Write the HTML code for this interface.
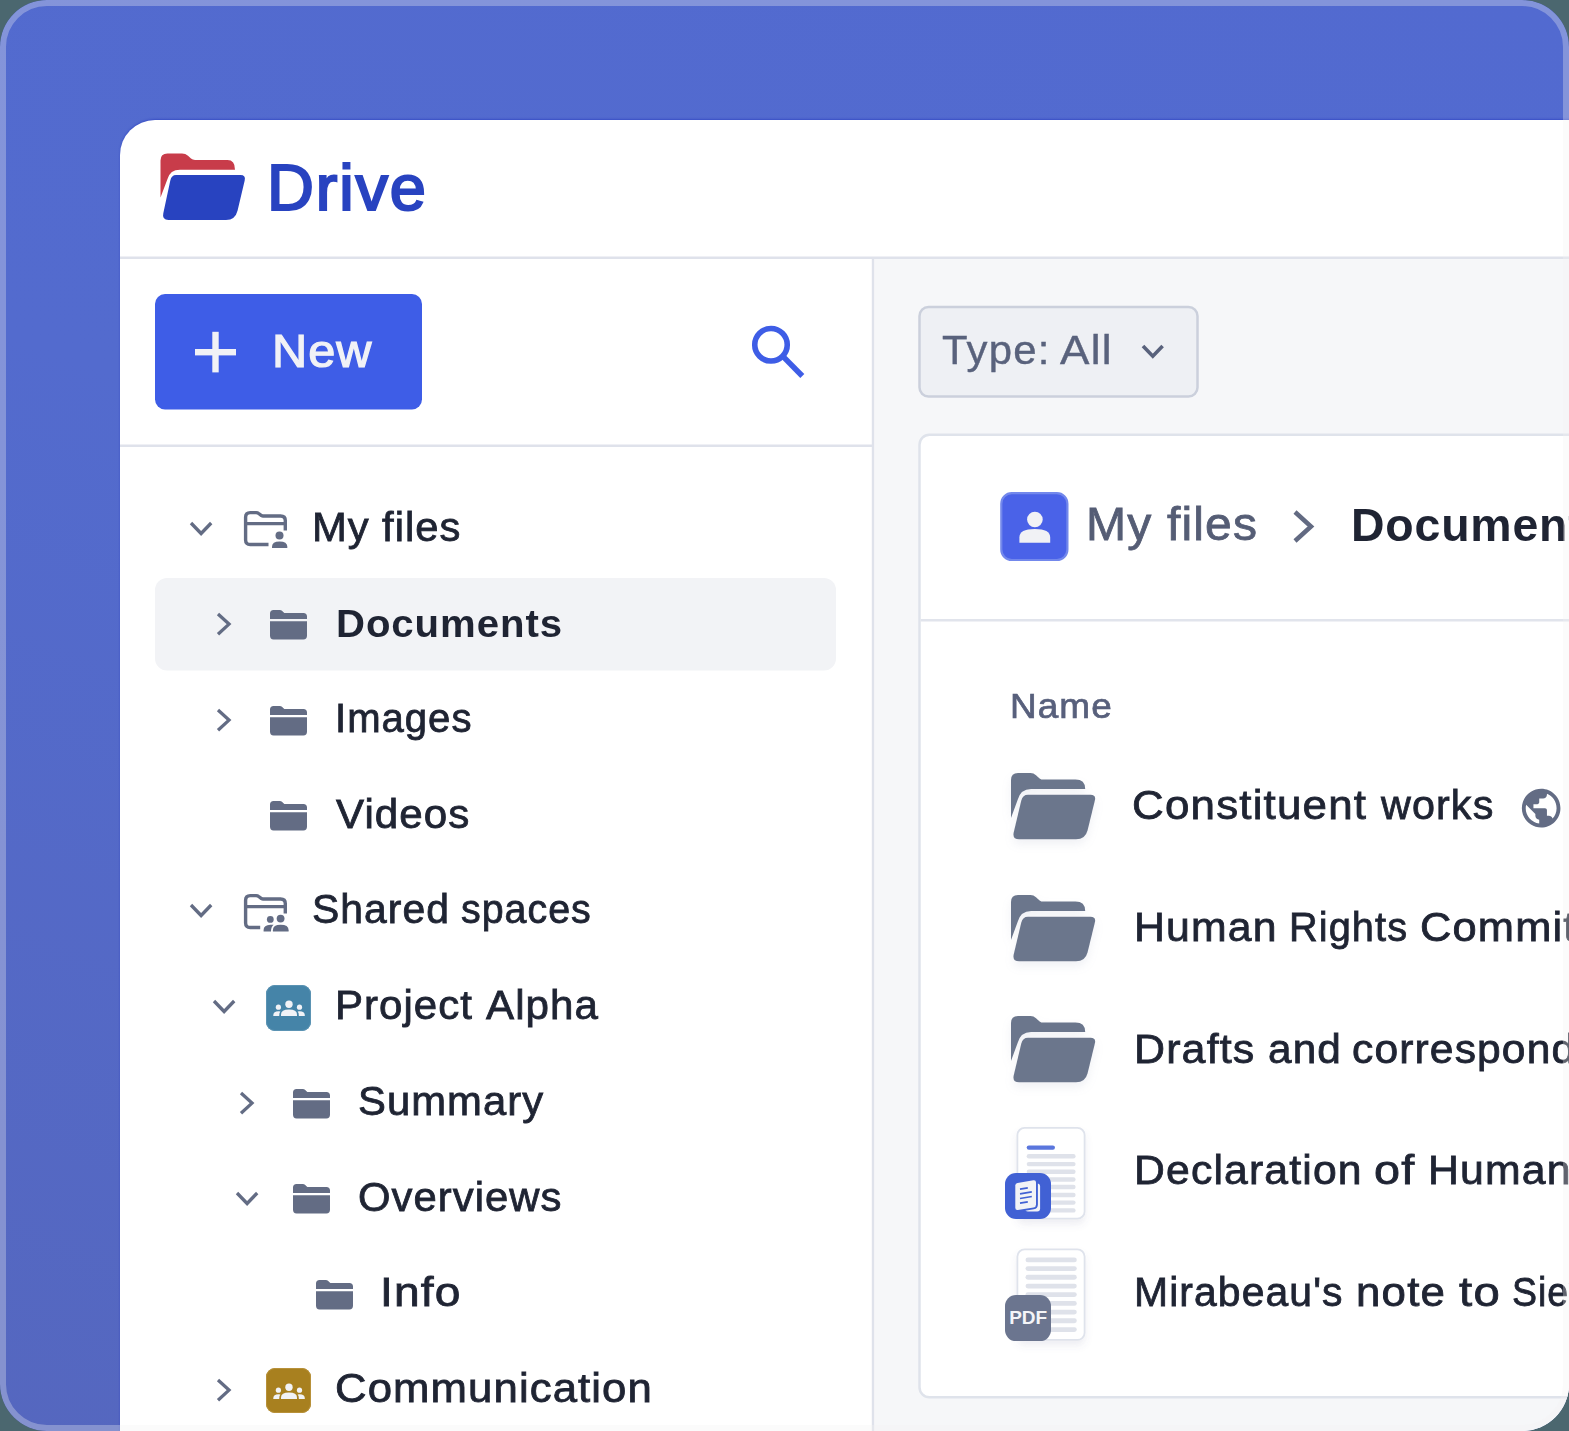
<!DOCTYPE html>
<html>
<head>
<meta charset="utf-8">
<title>Drive</title>
<style>
html,body{margin:0;padding:0;}
body{width:1569px;height:1431px;overflow:hidden;background:#4b676f;font-family:"Liberation Sans",sans-serif;position:relative;}
#frame{position:absolute;left:0;top:0;width:1569px;height:1431px;border-radius:47px;overflow:hidden;background:linear-gradient(200deg,#526ad0 0%,#536bce 45%,#5567bf 100%);}
#rim{position:absolute;left:0;top:0;width:1557px;height:1419px;border:6px solid rgba(243,243,243,0.31);border-radius:47px;z-index:50;pointer-events:none;}
#app{position:absolute;left:120px;top:120px;width:1460px;height:1320px;background:#fff;border-top-left-radius:35px;overflow:hidden;box-shadow:0 -1px 2px rgba(40,60,190,0.6);}
#c{position:absolute;left:-120px;top:-120px;width:1569px;height:1431px;}
.abs{position:absolute;}
.t{position:absolute;white-space:nowrap;line-height:1;color:#1f2433;}
svg{position:absolute;overflow:visible;}
.sh{filter:drop-shadow(0 5px 5px rgba(90,100,140,0.09));}
.sh2{box-shadow:0 5px 7px rgba(90,100,140,0.09);}
</style>
</head>
<body>
<div id="frame">
<div id="app">
<div id="c">
<svg style="left:0;top:0" width="1569" height="1431" viewBox="0 0 1569 1431"><rect x="874" y="259" width="700" height="1180" fill="#f6f7f9"/><rect x="120" y="256.5" width="1460" height="2.5" fill="#dfe2eb"/><rect x="871.8" y="258" width="2.3" height="1180" fill="#dfe2eb"/><rect x="120" y="444.5" width="752" height="2.5" fill="#dfe2eb"/><rect x="155" y="294" width="267" height="115.5" rx="10" fill="#3e5de7"/><rect x="195" y="349" width="41" height="6.4" fill="#f1f2f6"/><rect x="212.3" y="331.8" width="6.4" height="40.6" fill="#f1f2f6"/><rect x="155" y="578" width="681" height="92.6" rx="12" fill="#f2f3f6"/><rect x="919.5" y="307" width="278" height="89.5" rx="9" fill="#eef0f4" stroke="#cbd0dc" stroke-width="2.5"/><rect x="919.5" y="434.7" width="700" height="962.5" rx="10" fill="#fff" stroke="#dfe3eb" stroke-width="2.5"/><rect x="920.7" y="619.0" width="700" height="2.5" fill="#e1e4ec"/><rect x="1001.3" y="493.2" width="66.1" height="66.8" rx="10.5" fill="#4a62e8" stroke="#7388ec" stroke-width="2.2"/></svg>
<svg style="left:150px;top:140px;" width="110" height="100" viewBox="150 140 110 100">
  <path d="M160.5 197.5 V160.4 Q160.5 153.4 167.5 153.4 H182 Q185.5 153.4 188 155.8 L191 158.6 Q192.6 160 195 160 H227.5 Q235 160 235 169.7 H180 Q170 169.7 167.5 179 Z" fill="#c83c4a"/>
  <path d="M176 175 H240.5 Q246 175 244.7 180.5 L237.6 210.5 Q235.3 220 226 220 H168.5 Q161.8 220 163.3 213.3 L170.3 180.5 Q171.5 175 176 175 Z" fill="#2843c0"/>
</svg>
<div class="t" id="tDrive" style="left:266.6px;top:156px;font-size:64px;color:#2843c0;transform:scaleX(1.0151);transform-origin:0 0;letter-spacing:1.8px;-webkit-text-stroke:2.2px #2843c0;">Drive</div>
<div class="t" id="tNew" style="left:272.06px;top:328px;font-size:46px;color:#f1f2f6;transform:scaleX(1.0582);transform-origin:0 0;letter-spacing:1px;-webkit-text-stroke:1.2px #f1f2f6;">New</div>
<svg style="left:740px;top:315px;" width="80" height="75" viewBox="740 315 80 75">
  <circle cx="771" cy="344.8" r="16.25" fill="none" stroke="#3e5de6" stroke-width="5.6"/>
  <path d="M783.2 356.6 L802.3 376" stroke="#3e5de6" stroke-width="5.6" fill="none"/>
</svg>
<svg style="left:191px;top:522.5px" width="20.2" height="10.5"><path d="M0 0 L10.1 10.5 L20.2 0" fill="none" stroke="#636c84" stroke-width="3.3"/></svg>
<svg style="left:243.8px;top:510.5px" width="48" height="40" viewBox="0 0 48 40"><path d="M24.5 33.5 H6.2 Q1.6 33.5 1.6 28.9 V6.2 Q1.6 1.6 6.2 1.6 H12.2 Q13.6 1.6 14.7 2.5 L17.5 4.6 Q18.2 5.0 19 5.0 H36.6 Q41.3 5.0 41.3 9.6 V19.5" fill="none" stroke="#636c84" stroke-width="3.4" stroke-linejoin="round"/><path d="M1.6 12.7 H41.3" stroke="#636c84" stroke-width="3.3"/><circle cx="35.5" cy="24.4" r="4" fill="#636c84"/><path d="M28 37.1 V35.6 Q28 30.4 35.6 30.4 Q43.3 30.4 43.3 35.6 V37.1 Z" fill="#636c84"/></svg>
<div class="t" id="r0a" style="left:311.92px;top:507.0px;font-size:40px;color:#1f2433;transform:scaleX(1.0441);transform-origin:0 0;letter-spacing:1.0px;-webkit-text-stroke:0.8px #1f2433;">My</div><div class="t" id="r0b" style="left:382.01px;top:507.0px;font-size:40px;color:#1f2433;transform:scaleX(1.0429);transform-origin:0 0;letter-spacing:1.0px;-webkit-text-stroke:0.8px #1f2433;">files</div>
<svg style="left:218.0px;top:614.4px" width="11" height="20.2"><path d="M0 0 L11 10.1 L0 20.2" fill="none" stroke="#636c84" stroke-width="3.3"/></svg>
<svg style="left:269.9px;top:609.9px" width="37" height="29.4" viewBox="0 0 37 29.4"><path d="M0 8.9 V3.6 Q0 0 3.6 0 H9.6 Q11.3 0 12.5 1.2 L14.3 2.9 H33.4 Q37 2.9 37 6.5 V8.9 Z" fill="#636c84"/><path d="M0 11.2 H37 V25.8 Q37 29.4 33.4 29.4 H3.6 Q0 29.4 0 25.8 Z" fill="#636c84"/></svg>
<div class="t" id="r1a" style="left:335.58px;top:604.0px;font-size:39px;color:#1f2433;transform:scaleX(1.0294);transform-origin:0 0;letter-spacing:0.9px;font-weight:bold;">Documents</div>
<svg style="left:218.0px;top:710.1px" width="11" height="20.2"><path d="M0 0 L11 10.1 L0 20.2" fill="none" stroke="#636c84" stroke-width="3.3"/></svg>
<svg style="left:269.9px;top:705.6px" width="37" height="29.4" viewBox="0 0 37 29.4"><path d="M0 8.9 V3.6 Q0 0 3.6 0 H9.6 Q11.3 0 12.5 1.2 L14.3 2.9 H33.4 Q37 2.9 37 6.5 V8.9 Z" fill="#636c84"/><path d="M0 11.2 H37 V25.8 Q37 29.4 33.4 29.4 H3.6 Q0 29.4 0 25.8 Z" fill="#636c84"/></svg>
<div class="t" id="r2a" style="left:334.93px;top:698.0px;font-size:40px;color:#1f2433;transform:scaleX(1.0020);transform-origin:0 0;letter-spacing:1.0px;-webkit-text-stroke:0.8px #1f2433;">Images</div>
<svg style="left:269.9px;top:801.3px" width="37" height="29.4" viewBox="0 0 37 29.4"><path d="M0 8.9 V3.6 Q0 0 3.6 0 H9.6 Q11.3 0 12.5 1.2 L14.3 2.9 H33.4 Q37 2.9 37 6.5 V8.9 Z" fill="#636c84"/><path d="M0 11.2 H37 V25.8 Q37 29.4 33.4 29.4 H3.6 Q0 29.4 0 25.8 Z" fill="#636c84"/></svg>
<div class="t" id="r3a" style="left:336.18px;top:794.0px;font-size:40px;color:#1f2433;transform:scaleX(1.0528);transform-origin:0 0;letter-spacing:1.0px;-webkit-text-stroke:0.8px #1f2433;">Videos</div>
<svg style="left:191px;top:905.3px" width="20.2" height="10.5"><path d="M0 0 L10.1 10.5 L20.2 0" fill="none" stroke="#636c84" stroke-width="3.3"/></svg>
<svg style="left:243.8px;top:893.5px" width="48" height="40" viewBox="0 0 48 40"><path d="M16.2 33.5 H6.2 Q1.6 33.5 1.6 28.9 V6.2 Q1.6 1.6 6.2 1.6 H12.2 Q13.6 1.6 14.7 2.5 L17.5 4.6 Q18.2 5.0 19 5.0 H36.6 Q41.3 5.0 41.3 9.6 V19.5" fill="none" stroke="#636c84" stroke-width="3.4" stroke-linejoin="round"/><path d="M1.6 12.7 H41.3" stroke="#636c84" stroke-width="3.3"/><circle cx="26.3" cy="25.4" r="3.4" fill="#636c84"/><circle cx="36.6" cy="24.6" r="3.9" fill="#636c84"/><path d="M19.6 37.5 V36 Q19.6 31 26.5 30.8 L29.6 30.8 Q27 33 27 37.5 Z" fill="#636c84"/><path d="M28.9 37.5 V36.2 Q28.9 30.8 36.7 30.8 Q44.6 30.8 44.6 36.2 V37.5 Z" fill="#636c84"/></svg>
<div class="t" id="r4a" style="left:311.82px;top:889.0px;font-size:40px;color:#1f2433;transform:scaleX(1.0218);transform-origin:0 0;letter-spacing:1.0px;-webkit-text-stroke:0.8px #1f2433;">Shared</div><div class="t" id="r4b" style="left:460.5px;top:889.0px;font-size:40px;color:#1f2433;transform:scaleX(0.9847);transform-origin:0 0;letter-spacing:1.0px;-webkit-text-stroke:0.8px #1f2433;">spaces</div>
<svg style="left:214.0px;top:1001.0px" width="20.2" height="10.5"><path d="M0 0 L10.1 10.5 L20.2 0" fill="none" stroke="#636c84" stroke-width="3.3"/></svg>
<div class="abs" style="left:266px;top:985.1px;width:45.4px;height:45.6px;border-radius:9px;background:#4584a8;box-shadow:inset 0 0 0 1px #5b93b3;"></div><svg style="left:266px;top:985.1px" width="45.4" height="45.6" viewBox="0 0 45.4 45.6"><circle cx="23" cy="19.3" r="3.7" fill="#f1f2f6"/><circle cx="12.4" cy="22.2" r="2.6" fill="#f1f2f6"/><circle cx="33.5" cy="22.2" r="2.6" fill="#f1f2f6"/><path d="M15 31.1 V29.6 Q15 24.6 23 24.6 Q31 24.6 31 29.6 V31.1 Z" fill="#f1f2f6"/><path d="M7.3 31.1 V30 Q7.3 26.3 12.6 26.2 L14.4 26.4 Q13.2 27.8 13.2 31.1 Z" fill="#f1f2f6"/><path d="M38.8 31.1 V30 Q38.8 26.3 33.5 26.2 L31.7 26.4 Q32.9 27.8 32.9 31.1 Z" fill="#f1f2f6"/></svg>
<div class="t" id="r5a" style="left:335.09px;top:985.0px;font-size:40px;color:#1f2433;transform:scaleX(1.0495);transform-origin:0 0;letter-spacing:1.0px;-webkit-text-stroke:0.8px #1f2433;">Project</div><div class="t" id="r5b" style="left:486.48px;top:985.0px;font-size:40px;color:#1f2433;transform:scaleX(1.0523);transform-origin:0 0;letter-spacing:1.0px;-webkit-text-stroke:0.8px #1f2433;">Alpha</div>
<svg style="left:241.2px;top:1093.0px" width="11" height="20.2"><path d="M0 0 L11 10.1 L0 20.2" fill="none" stroke="#636c84" stroke-width="3.3"/></svg>
<svg style="left:293.09999999999997px;top:1088.5px" width="37" height="29.4" viewBox="0 0 37 29.4"><path d="M0 8.9 V3.6 Q0 0 3.6 0 H9.6 Q11.3 0 12.5 1.2 L14.3 2.9 H33.4 Q37 2.9 37 6.5 V8.9 Z" fill="#636c84"/><path d="M0 11.2 H37 V25.8 Q37 29.4 33.4 29.4 H3.6 Q0 29.4 0 25.8 Z" fill="#636c84"/></svg>
<div class="t" id="r6a" style="left:358.23px;top:1081.0px;font-size:40px;color:#1f2433;transform:scaleX(1.0445);transform-origin:0 0;letter-spacing:1.0px;-webkit-text-stroke:0.8px #1f2433;">Summary</div>
<svg style="left:237.2px;top:1192.5px" width="20.2" height="10.5"><path d="M0 0 L10.1 10.5 L20.2 0" fill="none" stroke="#636c84" stroke-width="3.3"/></svg>
<svg style="left:293.09999999999997px;top:1184.2px" width="37" height="29.4" viewBox="0 0 37 29.4"><path d="M0 8.9 V3.6 Q0 0 3.6 0 H9.6 Q11.3 0 12.5 1.2 L14.3 2.9 H33.4 Q37 2.9 37 6.5 V8.9 Z" fill="#636c84"/><path d="M0 11.2 H37 V25.8 Q37 29.4 33.4 29.4 H3.6 Q0 29.4 0 25.8 Z" fill="#636c84"/></svg>
<div class="t" id="r7a" style="left:357.91px;top:1177.0px;font-size:40px;color:#1f2433;transform:scaleX(1.0447);transform-origin:0 0;letter-spacing:1.0px;-webkit-text-stroke:0.8px #1f2433;">Overviews</div>
<svg style="left:316.29999999999995px;top:1279.9px" width="37" height="29.4" viewBox="0 0 37 29.4"><path d="M0 8.9 V3.6 Q0 0 3.6 0 H9.6 Q11.3 0 12.5 1.2 L14.3 2.9 H33.4 Q37 2.9 37 6.5 V8.9 Z" fill="#636c84"/><path d="M0 11.2 H37 V25.8 Q37 29.4 33.4 29.4 H3.6 Q0 29.4 0 25.8 Z" fill="#636c84"/></svg>
<div class="t" id="r8a" style="left:380.43px;top:1272.0px;font-size:40px;color:#1f2433;transform:scaleX(1.1528);transform-origin:0 0;letter-spacing:1.0px;-webkit-text-stroke:0.8px #1f2433;">Info</div>
<svg style="left:218.0px;top:1380.1px" width="11" height="20.2"><path d="M0 0 L11 10.1 L0 20.2" fill="none" stroke="#636c84" stroke-width="3.3"/></svg>
<div class="abs" style="left:266px;top:1367.9px;width:45.4px;height:45.6px;border-radius:9px;background:#a8801f;box-shadow:inset 0 0 0 1px #b8913a;"></div><svg style="left:266px;top:1367.9px" width="45.4" height="45.6" viewBox="0 0 45.4 45.6"><circle cx="23" cy="19.3" r="3.7" fill="#f1f2f6"/><circle cx="12.4" cy="22.2" r="2.6" fill="#f1f2f6"/><circle cx="33.5" cy="22.2" r="2.6" fill="#f1f2f6"/><path d="M15 31.1 V29.6 Q15 24.6 23 24.6 Q31 24.6 31 29.6 V31.1 Z" fill="#f1f2f6"/><path d="M7.3 31.1 V30 Q7.3 26.3 12.6 26.2 L14.4 26.4 Q13.2 27.8 13.2 31.1 Z" fill="#f1f2f6"/><path d="M38.8 31.1 V30 Q38.8 26.3 33.5 26.2 L31.7 26.4 Q32.9 27.8 32.9 31.1 Z" fill="#f1f2f6"/></svg>
<div class="t" id="r9a" style="left:334.63px;top:1368.0px;font-size:40px;color:#1f2433;transform:scaleX(1.0929);transform-origin:0 0;letter-spacing:1.0px;-webkit-text-stroke:0.8px #1f2433;">Communication</div>
<div class="t" id="tTypea" style="left:941.58px;top:330px;font-size:40px;color:#59627c;transform:scaleX(1.0462);transform-origin:0 0;letter-spacing:1.2px;-webkit-text-stroke:0.4px #59627c;">Type:</div><div class="t" id="tTypeb" style="left:1060.09px;top:330px;font-size:40px;color:#59627c;transform:scaleX(1.1029);transform-origin:0 0;letter-spacing:1.2px;-webkit-text-stroke:0.4px #59627c;">All</div>
<svg style="left:1143px;top:346px" width="19.6" height="10.2"><path d="M0 0 L9.8 10.2 L19.6 0" fill="none" stroke="#59627c" stroke-width="3.6"/></svg>
<svg style="left:1000px;top:492px" width="70" height="70" viewBox="1000 492 70 70"><circle cx="1034.9" cy="519.5" r="7.8" fill="#f1f2f5"/><path d="M1019.4 542.8 V537.5 Q1019.4 529.1 1034.8 529.1 Q1050.2 529.1 1050.2 537.5 V542.8 Z" fill="#f1f2f5"/></svg>
<div class="t" id="bc1a" style="left:1086.31px;top:501px;font-size:46px;color:#555d75;transform:scaleX(1.0463);transform-origin:0 0;letter-spacing:1.1px;-webkit-text-stroke:0.8px #555d75;">My</div><div class="t" id="bc1b" style="left:1166.54px;top:501px;font-size:46px;color:#555d75;transform:scaleX(1.0437);transform-origin:0 0;letter-spacing:1.1px;-webkit-text-stroke:0.8px #555d75;">files</div>
<svg style="left:1294.5px;top:511.5px" width="16" height="29"><path d="M0 0 L16 14.5 L0 29" fill="none" stroke="#626a82" stroke-width="4.5"/></svg>
<div class="t" id="bc2" style="left:1351.11px;top:502px;font-size:46px;color:#1f2433;transform:scaleX(1.0097);transform-origin:0 0;letter-spacing:0.8px;font-weight:bold;">Documents</div>
<div class="t" id="tName" style="left:1010.31px;top:689px;font-size:34.5px;color:#58607c;transform:scaleX(1.0705);transform-origin:0 0;letter-spacing:1.0px;-webkit-text-stroke:0.7px #58607c;">Name</div>
<div class="t" id="f0a" style="left:1132.08px;top:785.0px;font-size:41px;color:#1f2433;transform:scaleX(1.0716);transform-origin:0 0;letter-spacing:1.1px;-webkit-text-stroke:0.8px #1f2433;">Constituent</div><div class="t" id="f0b" style="left:1381.23px;top:785.0px;font-size:41px;color:#1f2433;transform:scaleX(1.0073);transform-origin:0 0;letter-spacing:1.1px;-webkit-text-stroke:0.8px #1f2433;">works</div>
<svg class="sh" style="left:1010.7px;top:772.7px" width="90" height="72" viewBox="0 0 90 72"><path d="M0 45 V7 Q0 0 7 0 H19.5 Q22.6 0 25 2.2 L28.6 5.4 Q30.2 6.6 32.2 6.6 H64.5 Q74.2 6.6 74.2 16 H20 Q9.5 16 6.6 27 Z" fill="#6b768c"/><path d="M20.5 21.7 H79.5 Q85.2 21.7 83.9 27.3 L76.6 57.2 Q74.3 66.3 65 66.3 H8.2 Q1.3 66.3 2.7 59.6 L10.3 27.5 Q11.7 21.7 17 21.7 Z" fill="#6b768c"/></svg>
<div class="t" id="f1a" style="left:1134.07px;top:907.0px;font-size:41px;color:#1f2433;transform:scaleX(1.0434);transform-origin:0 0;letter-spacing:1.1px;-webkit-text-stroke:0.8px #1f2433;">Human</div><div class="t" id="f1b" style="left:1289.28px;top:907.0px;font-size:41px;color:#1f2433;transform:scaleX(0.9699);transform-origin:0 0;letter-spacing:1.1px;-webkit-text-stroke:0.8px #1f2433;">Rights</div><div class="t" id="f1c" style="left:1419.73px;top:907.0px;font-size:41px;color:#1f2433;transform:scaleX(1.0591);transform-origin:0 0;letter-spacing:1.1px;-webkit-text-stroke:0.8px #1f2433;">Committee</div>
<svg class="sh" style="left:1010.7px;top:894.5px" width="90" height="72" viewBox="0 0 90 72"><path d="M0 45 V7 Q0 0 7 0 H19.5 Q22.6 0 25 2.2 L28.6 5.4 Q30.2 6.6 32.2 6.6 H64.5 Q74.2 6.6 74.2 16 H20 Q9.5 16 6.6 27 Z" fill="#6b768c"/><path d="M20.5 21.7 H79.5 Q85.2 21.7 83.9 27.3 L76.6 57.2 Q74.3 66.3 65 66.3 H8.2 Q1.3 66.3 2.7 59.6 L10.3 27.5 Q11.7 21.7 17 21.7 Z" fill="#6b768c"/></svg>
<div class="t" id="f2a" style="left:1134.06px;top:1029.0px;font-size:41px;color:#1f2433;transform:scaleX(1.0474);transform-origin:0 0;letter-spacing:1.1px;-webkit-text-stroke:0.8px #1f2433;">Drafts</div><div class="t" id="f2b" style="left:1267.81px;top:1029.0px;font-size:41px;color:#1f2433;transform:scaleX(1.0318);transform-origin:0 0;letter-spacing:1.1px;-webkit-text-stroke:0.8px #1f2433;">and</div><div class="t" id="f2c" style="left:1352.35px;top:1029.0px;font-size:41px;color:#1f2433;transform:scaleX(1.0378);transform-origin:0 0;letter-spacing:1.1px;-webkit-text-stroke:0.8px #1f2433;">correspondence</div>
<svg class="sh" style="left:1010.7px;top:1016.3px" width="90" height="72" viewBox="0 0 90 72"><path d="M0 45 V7 Q0 0 7 0 H19.5 Q22.6 0 25 2.2 L28.6 5.4 Q30.2 6.6 32.2 6.6 H64.5 Q74.2 6.6 74.2 16 H20 Q9.5 16 6.6 27 Z" fill="#6b768c"/><path d="M20.5 21.7 H79.5 Q85.2 21.7 83.9 27.3 L76.6 57.2 Q74.3 66.3 65 66.3 H8.2 Q1.3 66.3 2.7 59.6 L10.3 27.5 Q11.7 21.7 17 21.7 Z" fill="#6b768c"/></svg>
<div class="t" id="f3a" style="left:1134.07px;top:1150.0px;font-size:41px;color:#1f2433;transform:scaleX(1.0422);transform-origin:0 0;letter-spacing:1.1px;-webkit-text-stroke:0.8px #1f2433;">Declaration</div><div class="t" id="f3b" style="left:1374.01px;top:1150.0px;font-size:41px;color:#1f2433;transform:scaleX(1.1409);transform-origin:0 0;letter-spacing:1.1px;-webkit-text-stroke:0.8px #1f2433;">of</div><div class="t" id="f3c" style="left:1427.86px;top:1150.0px;font-size:41px;color:#1f2433;transform:scaleX(1.0434);transform-origin:0 0;letter-spacing:1.1px;-webkit-text-stroke:0.8px #1f2433;">Human</div>
<div class="t" id="f4a" style="left:1134.2px;top:1272.0px;font-size:41px;color:#1f2433;transform:scaleX(0.9968);transform-origin:0 0;letter-spacing:1.1px;-webkit-text-stroke:0.8px #1f2433;">Mirabeau's</div><div class="t" id="f4b" style="left:1356.32px;top:1272.0px;font-size:41px;color:#1f2433;transform:scaleX(1.0698);transform-origin:0 0;letter-spacing:1.1px;-webkit-text-stroke:0.8px #1f2433;">note</div><div class="t" id="f4c" style="left:1458.78px;top:1272.0px;font-size:41px;color:#1f2433;transform:scaleX(1.1538);transform-origin:0 0;letter-spacing:1.1px;-webkit-text-stroke:0.8px #1f2433;">to</div><div class="t" id="f4d" style="left:1511.98px;top:1272.0px;font-size:41px;color:#1f2433;transform:scaleX(0.9144);transform-origin:0 0;letter-spacing:1.1px;-webkit-text-stroke:0.8px #1f2433;">Sieyès</div>
<svg style="left:1518.2px;top:784.5px" width="46.3" height="46.3" viewBox="0 0 24 24"><path fill="#636c84" d="M12 2C6.48 2 2 6.480 2 12s4.480 10 10 10 10-4.480 10-10S17.520 2 12 2zm-1 17.930c-3.950-.490-7-3.850-7-7.930 0-.620.080-1.210.210-1.790L9 15v1c0 1.100.900 2 2 2v1.930zm6.900-2.540c-.260-.810-1-1.390-1.900-1.390h-1v-3c0-.550-.450-1-1-1H8v-2h2c.550 0 1-.450 1-1V7h2c1.100 0 2-.900 2-2v-.410c2.930 1.190 5 4.060 5 7.410 0 2.080-.800 3.970-2.100 5.390z"/></svg>
<svg style="left:0;top:0" width="1569" height="1431" viewBox="0 0 1569 1431"><defs><filter id="psh" x="-30%" y="-30%" width="160%" height="160%"><feDropShadow dx="0" dy="5" stdDeviation="3.5" flood-color="#5a648c" flood-opacity="0.10"/></filter></defs><g filter="url(#psh)"><rect x="1017.4" y="1127.9" width="67.2" height="90.7" rx="7.2" fill="#fff" stroke="#dfe3ec" stroke-width="1.8"/></g><rect x="1026.7" y="1145.4" width="28.3" height="4.4" rx="2.2" fill="#5a76dd"/><rect x="1026.7" y="1154.1" width="48.9" height="4.4" rx="2.2" fill="#dfe2ea"/><rect x="1026.7" y="1161.9" width="48.9" height="4.4" rx="2.2" fill="#dfe2ea"/><rect x="1026.7" y="1169.5" width="48.9" height="4.4" rx="2.2" fill="#dfe2ea"/><rect x="1026.7" y="1177.3" width="48.9" height="4.4" rx="2.2" fill="#dfe2ea"/><rect x="1026.7" y="1184.8" width="48.9" height="4.4" rx="2.2" fill="#dfe2ea"/><rect x="1026.7" y="1192.8" width="48.9" height="4.4" rx="2.2" fill="#dfe2ea"/><rect x="1026.7" y="1200.4" width="48.9" height="4.4" rx="2.2" fill="#dfe2ea"/><rect x="1026.7" y="1208.2" width="48.9" height="4.4" rx="2.2" fill="#dfe2ea"/><rect x="1005" y="1173" width="46" height="46" rx="11" fill="#4161d4"/></svg>
<svg style="left:1005px;top:1173px" width="46" height="46" viewBox="1005 1173 46 46">
<rect x="1025" y="1183.5" width="15.1" height="28" rx="2.9" fill="#f2f3f6"/>
<path d="M1017.6 1182.9 L1033.4 1180.2 Q1036 1179.8 1036 1182.5 V1204.5 Q1036 1207 1033.5 1207.5 L1017.8 1210 Q1015.3 1210.3 1015.3 1207.7 V1185.5 Q1015.3 1183.3 1017.6 1182.9 Z" fill="#f2f3f6" stroke="#4161d4" stroke-width="3.8" paint-order="stroke"/>
<path d="M1020 1189.2 L1027.8 1187.9 M1020 1193.9 L1031.8 1191.9 M1020 1198.5 L1031.8 1196.5 M1020 1203.1 L1027.8 1201.8" stroke="#4161d4" stroke-width="1.7" fill="none"/>
</svg>
<svg style="left:0;top:0" width="1569" height="1431" viewBox="0 0 1569 1431"><g filter="url(#psh)"><rect x="1017.4" y="1249.4" width="67.2" height="90.5" rx="7.2" fill="#fff" stroke="#dfe3ec" stroke-width="1.8"/></g><rect x="1025.5" y="1257.45" width="51.3" height="4.9" rx="2.45" fill="#dfe2ea"/><rect x="1025.5" y="1266.15" width="51.3" height="4.9" rx="2.45" fill="#dfe2ea"/><rect x="1025.5" y="1274.85" width="51.3" height="4.9" rx="2.45" fill="#dfe2ea"/><rect x="1025.5" y="1283.65" width="51.3" height="4.9" rx="2.45" fill="#dfe2ea"/><rect x="1025.5" y="1292.15" width="51.3" height="4.9" rx="2.45" fill="#dfe2ea"/><rect x="1025.5" y="1300.95" width="51.3" height="4.9" rx="2.45" fill="#dfe2ea"/><rect x="1025.5" y="1309.65" width="51.3" height="4.9" rx="2.45" fill="#dfe2ea"/><rect x="1025.5" y="1318.35" width="51.3" height="4.9" rx="2.45" fill="#dfe2ea"/><rect x="1025.5" y="1327.15" width="51.3" height="4.9" rx="2.45" fill="#dfe2ea"/><rect x="1005" y="1295.1" width="46" height="46" rx="11" fill="#6b758f"/></svg>
<div class="t" id="tPDF" style="left:1009.2px;top:1307.8px;font-size:19px;color:#f4f5f8;font-weight:bold;">PDF</div>
</div>
</div>
<div id="rim"></div>
</div>
</body>
</html>
